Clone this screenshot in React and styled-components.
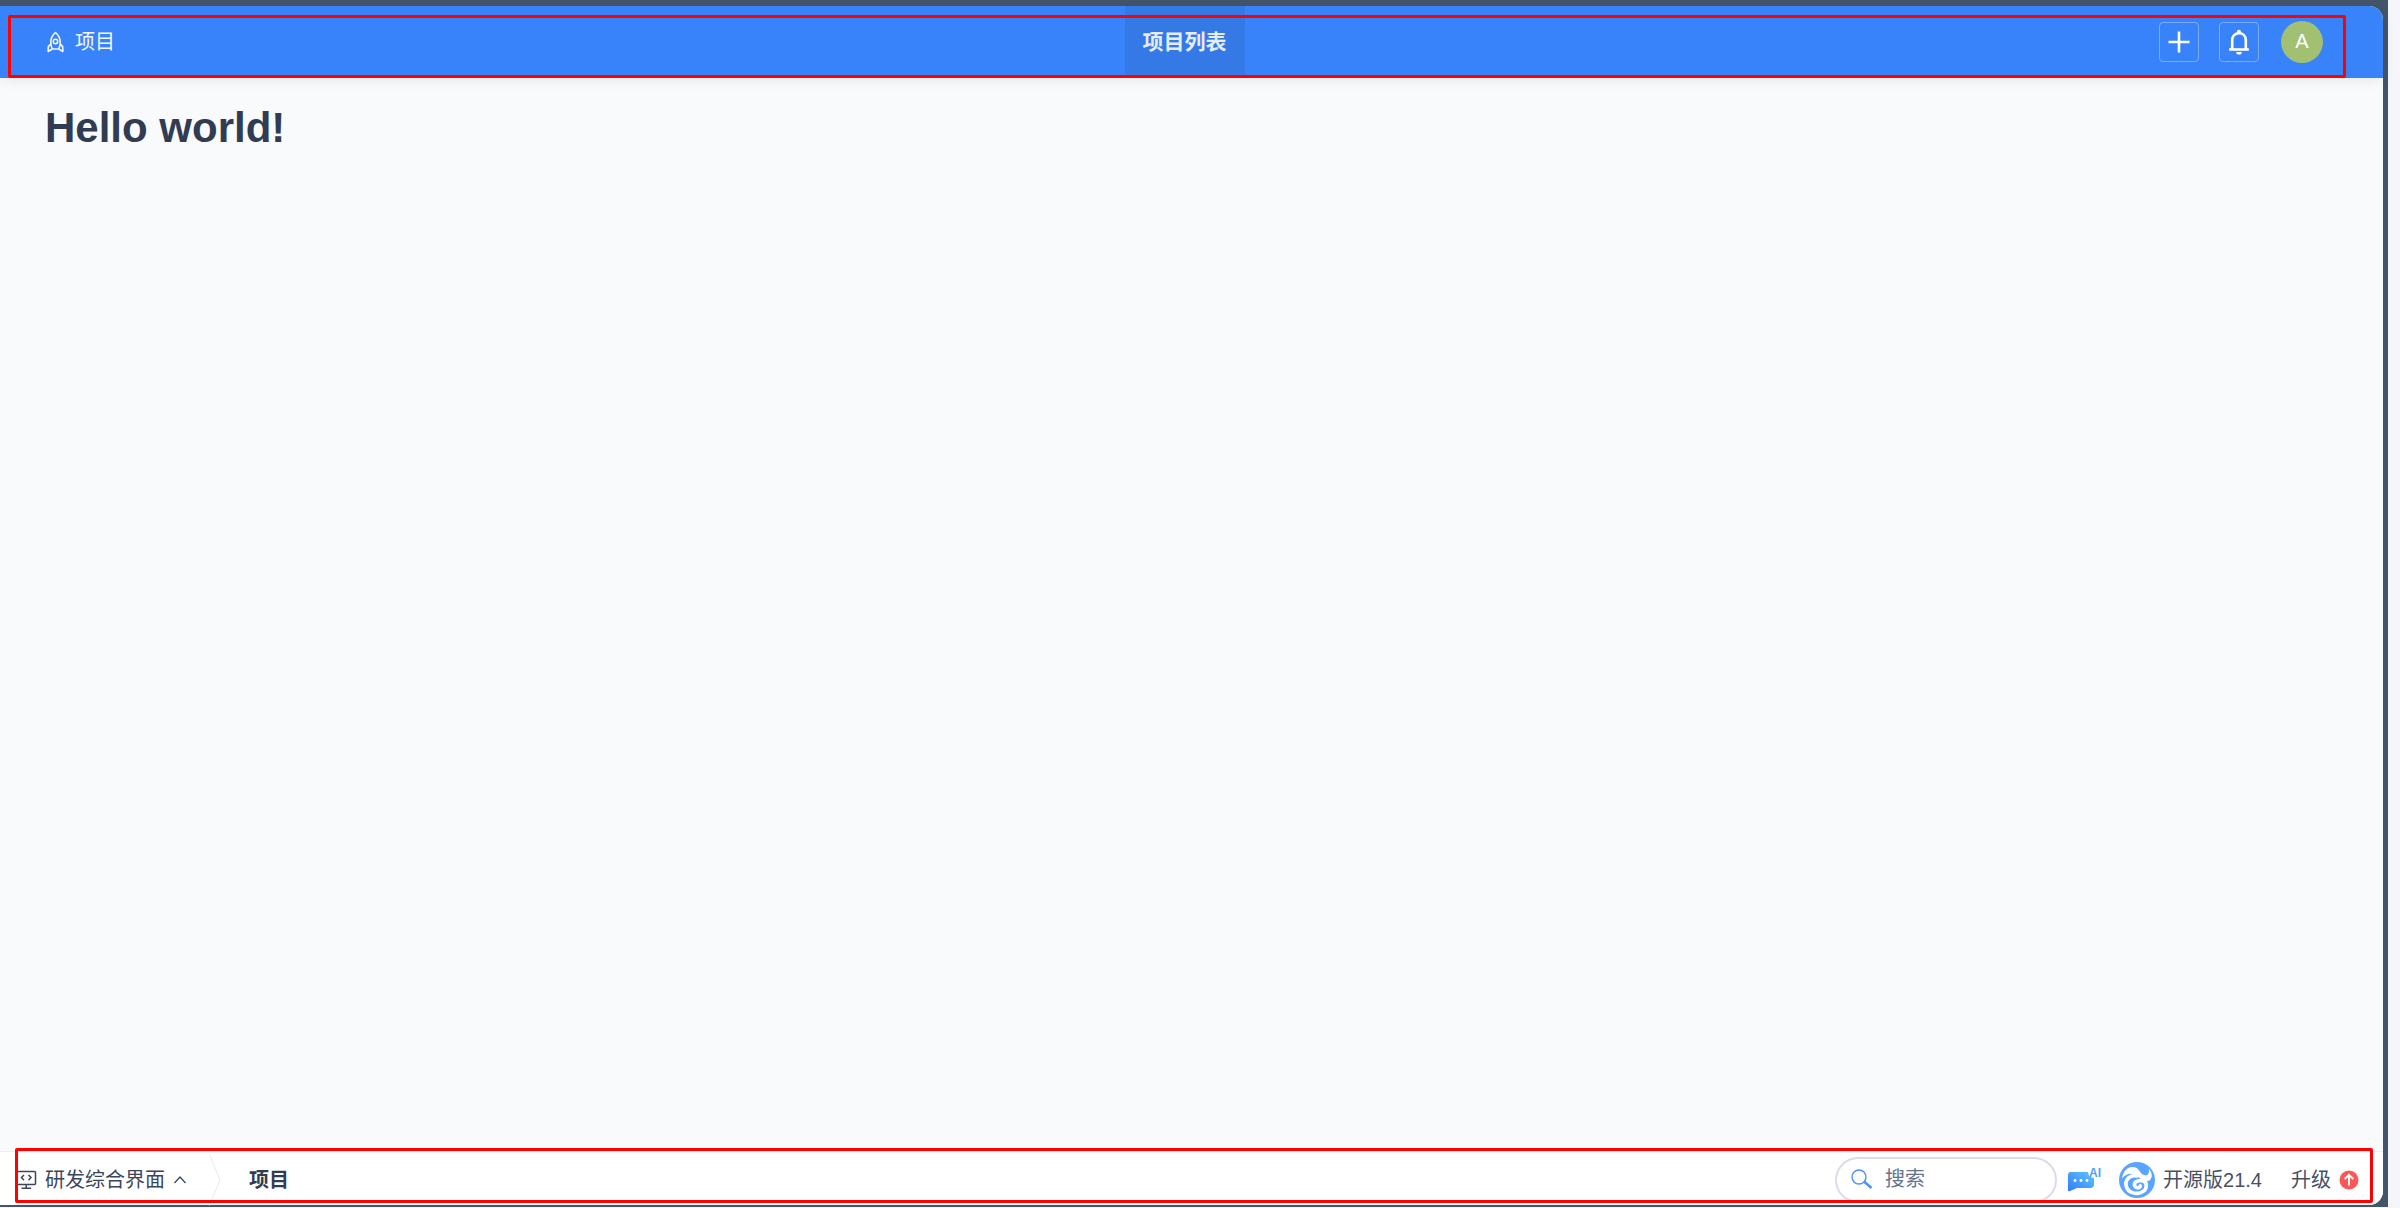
import React, { useState } from 'react';
import styled, { createGlobalStyle } from 'styled-components';

const sans = '"Liberation Sans", "Noto Sans CJK SC", sans-serif';

const GlobalStyle = createGlobalStyle`
    * {
        box-sizing: border-box;
    }

    body {
        margin: 0;
        background-color: #f4f6f9;
        color: #313c52;
        font-family: ${sans};
        font-size: 20px;
        line-height: 30px;
    }

    button, input {
        font: inherit;
        color: inherit;
    }
`;

const Frame = styled.div`
    display: flex;
    min-height: calc(100vh - 1px);
    margin: 0 12px 1px 0;
    padding: 6px 5px 2px 0;
    background-color: #44546a;
`;

const Container = styled.div`
    flex: 1;
    display: flex;
    flex-direction: column;
    border-radius: 0 14px 14px 0;
    background-color: #f8fafb;
`;

const Header = styled.header`
    position: relative;
    display: grid;
    grid-template-columns: 1fr auto 1fr;
    align-items: center;
    height: 72px;
    padding: 0 60px 0 46px;
    border-radius: 0 14px 0 0;
    background-color: #3883fa;
    color: #f2f6ff;
    box-shadow: 0 2px 14px rgba(0, 0, 0, 0.08);
`;

const Heading = styled.a`
    display: flex;
    align-items: center;
    gap: 10px;
    justify-self: start;
    color: inherit;
    text-decoration: none;
`;

const Nav = styled.nav`
    display: flex;
    align-self: stretch;
`;

const NavLink = styled.a`
    display: flex;
    align-items: center;
    padding: 0 18px;
    background-color: #3579e6;
    color: #e6ecf6;
    font-size: 21px;
    font-weight: 700;
    text-decoration: none;
`;

const Toolbar = styled.div`
    display: flex;
    align-items: center;
    justify-self: end;
    gap: 20px;
`;

const ToolButton = styled.button`
    display: flex;
    align-items: center;
    justify-content: center;
    width: 40px;
    height: 40px;
    padding: 0;
    border: 1px solid #79abfb;
    border-radius: 4px;
    background: transparent;
    color: white;
    cursor: pointer;
`;

const Avatar = styled.button`
    width: 42px;
    height: 42px;
    margin-left: 2px;
    padding: 0 0 2px;
    border: none;
    border-radius: 50%;
    background-color: #a2c072;
    color: white;
    cursor: pointer;
`;

const Main = styled.main`
    flex: 1;
    padding: 25px 45px;
`;

const Title = styled.h1`
    margin: 0;
    font-size: 42px;
    line-height: 50px;
    font-weight: 700;
`;

const Footer = styled.footer`
    position: relative;
    display: flex;
    align-items: center;
    justify-content: space-between;
    height: 54px;
    padding: 2px 24px 0 16px;
    border-top: 1px solid #eceef1;
    border-radius: 0 0 14px 0;
    background-color: white;
`;

const Group = styled.div`
    display: flex;
    align-items: center;
    align-self: stretch;
`;

const AppMenu = styled.button`
    display: flex;
    align-items: center;
    gap: 8px;
    padding: 0;
    border: none;
    background: transparent;
    color: #3c465b;
    cursor: pointer;
`;

const Crumb = styled.a`
    padding-left: 28px;
    color: inherit;
    font-weight: 700;
    text-decoration: none;
`;

const Divider = styled.svg`
    margin-left: 22px;
`;

const SearchBox = styled.label`
    display: flex;
    align-items: center;
    gap: 12px;
    width: 222px;
    height: 46px;
    margin-right: 10px;
    padding: 0 14px 2px;
    border: 2px solid #d9dce9;
    border-radius: 23px;
`;

const SearchInput = styled.input`
    flex: 1;
    min-width: 0;
    padding: 0;
    border: none;
    outline: none;
    background: transparent;

    &::placeholder {
        color: #64758b;
        opacity: 1;
    }
`;

const IconButton = styled.button`
    display: flex;
    margin-right: 16px;
    padding: 0;
    border: none;
    background: transparent;
    cursor: pointer;
`;

const FooterLink = styled.a`
    display: flex;
    align-items: center;
    gap: 8px;
    margin-left: ${props => props.$space || 0}px;
    color: #475064;
    text-decoration: none;
`;

const Highlight = styled.div`
    position: absolute;
    inset: ${props => props.$inset};
    border: 3px solid #ff0000;
    border-radius: 2px;
    pointer-events: none;
`;

const RocketIcon = () => (
    <svg width="19" height="22" viewBox="0 0 19 22" fill="none" stroke="currentColor" strokeWidth="1.6" strokeLinejoin="round">
        <path d="M9.5 1.500C6.500 4 4.800 7.500 4.800 11.500c0 2.500.6 4.500 1.500 6.500h6.400c.9-2 1.500-4 1.500-6.500 0-4-1.700-7.500-4.700-10z" />
        <circle cx="9.500" cy="10.500" r="2.200" />
        <path d="M4.800 13c-1.700 1.200-2.600 2.500-2.600 4.200v3.300l4-2.500M14.200 13c1.700 1.200 2.600 2.500 2.600 4.200v3.300l-4-2.500" />
    </svg>
);

const PlusIcon = () => (
    <svg width="24" height="24" viewBox="0 0 24 24" stroke="currentColor" strokeWidth="2.600">
        <path d="M12 1.500v21M1.500 12h21" />
    </svg>
);

const BellIcon = () => (
    <svg width="24" height="26" viewBox="0 0 24 26" fill="none">
        <path d="M5.200 20v-9c0-4 2.800-6.800 6.800-6.800s6.800 2.800 6.800 6.800v9" stroke="currentColor" strokeWidth="2.600" />
        <path d="M2.200 20.500h19.600" stroke="currentColor" strokeWidth="2.600" />
        <path d="M10 4.500V2.800a2 2 0 0 1 4 0v1.700zM9.200 23h5.600a2.800 2.600 0 0 1-5.600 0z" fill="currentColor" />
    </svg>
);

const MonitorIcon = () => (
    <svg width="21" height="20" viewBox="0 0 21 20" fill="none" stroke="currentColor" strokeWidth="1.500">
        <rect x="1" y="1.500" width="18.500" height="13" rx="1" />
        <path d="M10.200 14.500v4M5.500 18.300h9.500M8 5L5.500 7.600 8 10.200M12.500 5L15 7.600l-2.500 2.600" />
    </svg>
);

const ChevronUpIcon = () => (
    <svg width="14" height="10" viewBox="0 0 14 10" fill="none" stroke="currentColor" strokeWidth="1.300">
        <path d="M1.500 8L7 2l5.500 6" />
    </svg>
);

const SearchIcon = () => (
    <svg width="22" height="20" viewBox="0 0 22 20" fill="none" stroke="#4b92f8">
        <circle cx="8" cy="8" r="7" strokeWidth="1.400" />
        <path d="M13 12.500l7.500 6.500" strokeWidth="2.400" />
    </svg>
);

const AiIcon = () => (
    <svg width="36" height="30" viewBox="0 0 36 30">
        <defs>
            <linearGradient id="ai" x1="0" y1="1" x2="1" y2="0">
                <stop offset="0" stopColor="#2f7dfb" />
                <stop offset="1" stopColor="#60c5fd" />
            </linearGradient>
        </defs>
        <path d="M4 7h17c.5 3.500 2 5.500 6 6v6.500c0 2-1.500 3.500-3.500 3.500H10L3 26c-1.300.6-2 .2-2-1V10c0-2 1-3 3-3z" fill="url(#ai)" />
        <g fill="white">
            <circle cx="8" cy="15.500" r="1.400" />
            <circle cx="14" cy="15.500" r="1.400" />
            <circle cx="20" cy="15.500" r="1.400" />
        </g>
        <text x="22" y="12" fontFamily="Liberation Sans, sans-serif" fontSize="12" fontWeight="700" fill="#4ba3fb">AI</text>
    </svg>
);

const Logo = () => (
    <svg width="36" height="36" viewBox="0 0 108 108">
        <circle cx="54" cy="54" r="54" fill="#59a5ff" />
        <path d="M9 50C12 28 25 14 43 15c19 2 18 20 32 24 10 3 18-4 14-19 14 14 12 34-4 38-15 3-25-15-39-21-13-5-28 0-37 13z" fill="white" />
        <path d="M55 42C34 36 19 52 21 69c3 22 28 30 46 22 20-9 19-33 1-35-14-2-24 6-21 15 3 8 14 8 17 1" fill="none" stroke="white" strokeWidth="11" strokeLinecap="round" />
    </svg>
);

const UpgradeIcon = () => (
    <svg width="20" height="20" viewBox="0 0 20 20">
        <circle cx="10" cy="10" r="9.500" fill="#fb5758" />
        <path d="M10 15.500V5M5.800 9L10 4.800 14.200 9" fill="none" stroke="white" strokeWidth="2" />
    </svg>
);

export default function App() {
    const [keyword, setKeyword] = useState('');

    return (
        <Frame>
            <GlobalStyle />
            <Container>
                <Header>
                    <Heading href="#">
                        <RocketIcon />
                        项目
                    </Heading>
                    <Nav>
                        <NavLink href="#">项目列表</NavLink>
                    </Nav>
                    <Toolbar>
                        <ToolButton aria-label="添加"><PlusIcon /></ToolButton>
                        <ToolButton aria-label="消息"><BellIcon /></ToolButton>
                        <Avatar>A</Avatar>
                    </Toolbar>
                    <Highlight $inset="9px 37px 0 8px" />
                </Header>
                <Main>
                    <Title>Hello world!</Title>
                </Main>
                <Footer>
                    <Group>
                        <AppMenu>
                            <MonitorIcon />
                            研发综合界面
                            <ChevronUpIcon />
                        </AppMenu>
                        <Divider width="12" height="52" viewBox="0 0 12 52" fill="none" stroke="#e6e8ec">
                            <path d="M0.500 0.500L11 26L0.500 51.500" />
                        </Divider>
                        <Crumb href="#">项目</Crumb>
                    </Group>
                    <Group>
                        <SearchBox>
                            <SearchIcon />
                            <SearchInput
                                aria-label="搜索"
                                placeholder="搜索"
                                value={keyword}
                                onChange={e => setKeyword(e.target.value)}
                            />
                        </SearchBox>
                        <IconButton aria-label="AI"><AiIcon /></IconButton>
                        <FooterLink href="#">
                            <Logo />
                            开源版21.4
                        </FooterLink>
                        <FooterLink href="#" $space={29}>
                            升级
                            <UpgradeIcon />
                        </FooterLink>
                    </Group>
                    <Highlight $inset="-4px 10px 2px 15px" />
                </Footer>
            </Container>
        </Frame>
    );
}
